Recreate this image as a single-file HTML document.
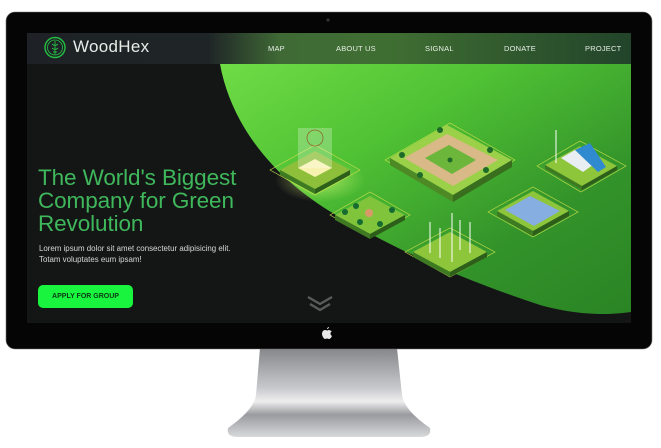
<!DOCTYPE html>
<html><head><meta charset="utf-8"><style>
html,body{margin:0;padding:0;background:#fff;width:661px;height:448px;overflow:hidden;position:relative;font-family:"Liberation Sans",sans-serif}
.abs{position:absolute}
.nav a{position:absolute;top:44px;font-size:7.5px;color:#e6eee6;letter-spacing:.2px}
</style></head><body>
<svg class="abs" style="left:0;top:0" width="661" height="448" viewBox="0 0 661 448">
<defs>
<linearGradient id="st" x1="0" y1="0" x2="0" y2="1">
<stop offset="0" stop-color="#858689"/><stop offset=".45" stop-color="#c8c9cc"/><stop offset=".6" stop-color="#eeeeef"/><stop offset=".75" stop-color="#9a9b9e"/><stop offset="1" stop-color="#d8d9db"/></linearGradient>
<linearGradient id="nav" x1="0" y1="0" x2="1" y2="0">
<stop offset="0" stop-color="#1e2226"/><stop offset=".3" stop-color="#1f2527"/><stop offset=".42" stop-color="#3f6a35"/><stop offset=".6" stop-color="#3f6e32"/><stop offset="1" stop-color="#22442a"/></linearGradient>
<linearGradient id="gr" x1="0" y1="0" x2="1" y2="1">
<stop offset="0" stop-color="#6fdc45"/><stop offset=".35" stop-color="#4fc134"/><stop offset=".7" stop-color="#33932a"/><stop offset="1" stop-color="#2a8424"/></linearGradient>
<radialGradient id="glow"><stop offset="0" stop-color="#eaff80" stop-opacity=".55"/><stop offset="1" stop-color="#eaff80" stop-opacity="0"/></radialGradient>
</defs>
<path d="M260 348 L397 348 L402 395 Q404 410 430 428 Q432 437 420 437 L238 437 Q226 437 228 428 Q254 410 256 395 Z" fill="url(#st)"/>
<rect x="6" y="12" width="646" height="337" rx="9" fill="#050505" stroke="#777" stroke-width=".6"/>
<circle cx="328" cy="20" r="1.6" fill="#333"/>
<rect x="27" y="33" width="604" height="290" fill="#141616"/>
<path d="M220 64 C232 130 280 185 345 220 C420 262 480 285 540 305 C580 316 610 315 631 312 L631 64 Z" fill="url(#gr)"/>
<rect x="27" y="33" width="604" height="31" fill="url(#nav)"/>
<circle cx="55" cy="47.5" r="10" fill="none" stroke="#23c043" stroke-width="1.4"/>
<circle cx="55" cy="47.5" r="7.5" fill="none" stroke="#23c043" stroke-width=".8"/>
<path d="M55 41 V55 M52 44 Q55 47 58 44 M52 48 Q55 51 58 48 M53 52 L57 52" stroke="#23c043" stroke-width=".9" fill="none"/>
<ellipse cx="320" cy="180" rx="45" ry="22" fill="url(#glow)"/>
<path d="M270 170 L315 145 L360 170 L315 195 Z" fill="none" stroke="#c9e04a" stroke-width=".6"/>
<path d="M280 170 L315 151 L350 170 L315 189 Z" fill="#8dbf3a"/><path d="M280 170 L315 189 L315 194 L280 175 Z" fill="#3e7a22"/><path d="M350 170 L315 189 L315 194 L350 175Z" fill="#2d5e1a"/>
<path d="M298 168 L315 159 L332 168 L315 177 Z" fill="#f7f2b0"/>
<rect x="298" y="128" width="34" height="40" fill="#fff" opacity=".25"/>
<circle cx="315" cy="138" r="8" fill="none" stroke="#8a6b30" stroke-width=".8"/>
<path d="M330 215 L370 192 L410 215 L370 238 Z" fill="none" stroke="#c9e04a" stroke-width=".6"/>
<path d="M335 215 L370 196 L405 215 L370 234 Z" fill="#7fc43b"/><path d="M335 215 L370 234 L370 239 L335 220Z" fill="#3e7a22"/><path d="M405 215 L370 234 L370 239 L405 220Z" fill="#2d5e1a"/>
<g fill="#156b30"><circle cx="345" cy="212" r="3"/><circle cx="356" cy="206" r="3"/><circle cx="392" cy="210" r="3"/><circle cx="380" cy="224" r="3"/><circle cx="360" cy="222" r="3"/></g>
<circle cx="369" cy="213" r="4" fill="#d99a6a"/>
<path d="M385 160 L450 123 L515 160 L450 197 Z" fill="none" stroke="#c9e04a" stroke-width=".6"/>
<path d="M390 158 L447 125 L512 160 L453 195 Z" fill="#9ad148"/><path d="M390 158 L453 195 L453 202 L390 165Z" fill="#4d8a26"/><path d="M512 160 L453 195 L453 202 L512 167Z" fill="#396e1e"/>
<path d="M404 158 L447 134 L498 160 L453 186 Z" fill="#d8b987"/>
<path d="M425 158 L449 145 L476 160 L452 174 Z" fill="#6cb63c"/>
<g fill="#1d6a2a"><circle cx="402" cy="155" r="3"/><circle cx="440" cy="130" r="3"/><circle cx="490" cy="150" r="3"/><circle cx="486" cy="170" r="3"/><circle cx="420" cy="175" r="3"/><circle cx="450" cy="160" r="2.5"/></g>
<path d="M405 252 L450 228 L495 252 L450 277 Z" fill="none" stroke="#c9e04a" stroke-width=".6"/>
<path d="M413 252 L450 232 L487 252 L450 272 Z" fill="#8dc53b"/><path d="M413 252 L450 272 L450 277 L413 257Z" fill="#3e7a22"/><path d="M487 252 L450 272 L450 277 L487 257Z" fill="#2d5e1a"/>
<g stroke="#fff" stroke-width="1"><path d="M430 222 V253 M440 228 V258 M452 213 V262 M460 220 V250 M470 222 V253"/></g>
<path d="M488 212 L533 187 L578 212 L533 237 Z" fill="none" stroke="#c9e04a" stroke-width=".6"/>
<path d="M497 211 L533 191 L569 211 L533 231 Z" fill="#8dc53b"/><path d="M497 211 L533 231 L533 236 L497 216Z" fill="#3e7a22"/><path d="M569 211 L533 231 L533 236 L569 216Z" fill="#2d5e1a"/>
<path d="M505 210 L530 196 L560 211 L534 226 Z" fill="#86aee0"/>
<path d="M537 166 L580 141 L626 166 L581 192 Z" fill="none" stroke="#c9e04a" stroke-width=".6"/>
<path d="M545 165 L580 146 L617 166 L582 186 Z" fill="#8dc53b"/><path d="M545 165 L582 186 L582 190 L545 169Z" fill="#3e7a22"/><path d="M617 166 L582 186 L582 190 L617 170Z" fill="#2d5e1a"/>
<path d="M561 158 L575 150 L597 162 L583 172 Z" fill="#e8eef2"/><path d="M575 150 L590 143 L606 167 L598 172 Z" fill="#2f8ad0"/>
<path d="M556 130 V163" stroke="#fff" stroke-width="1"/>
<path d="M308 297 L320 304 L332 297 M310 304 L320 310 L330 304" stroke="#5a5d5c" stroke-width="2.2" fill="none"/>
<path d="M328 330 c2 0 3 1 4 1 c-2 1 -2 4 0 5 c-1 2 -2 3 -3 3 c-1 0 -1 -.5 -2 -.5 c-1 0 -1 .5 -2 .5 c-1 0 -3 -3 -3 -5 c0 -3 2 -4 3 -4 c1 0 2 .5 3 .5z M329 327 c0 1 -1 2 -2 2 c0 -1 1 -2 2 -2z" fill="#e8e8e8"/>
</svg>
<div class="abs" style="left:73px;top:37px;font-size:17px;color:#e8ece8;letter-spacing:.3px">WoodHex</div>
<div class="nav">
<a style="left:268px">MAP</a><a style="left:336px">ABOUT US</a><a style="left:425px">SIGNAL</a><a style="left:504px">DONATE</a><a style="left:585px">PROJECT</a>
</div>
<div class="abs" style="left:38px;top:166px;font-size:22.5px;line-height:23px;color:#3fb75b;letter-spacing:-.1px">The World's Biggest<br>Company for Green<br>Revolution</div>
<div class="abs" style="left:39px;top:243px;font-size:7.9px;line-height:11px;color:#d4d8d4">Lorem ipsum dolor sit amet consectetur adipisicing elit.<br>Totam voluptates eum ipsam!</div>
<div class="abs" style="left:38px;top:285px;width:95px;height:23px;border-radius:5px;background:#19f53e;color:#0d3a14;font-size:7px;font-weight:bold;text-align:center;line-height:23px">APPLY FOR GROUP</div>
</body></html>
